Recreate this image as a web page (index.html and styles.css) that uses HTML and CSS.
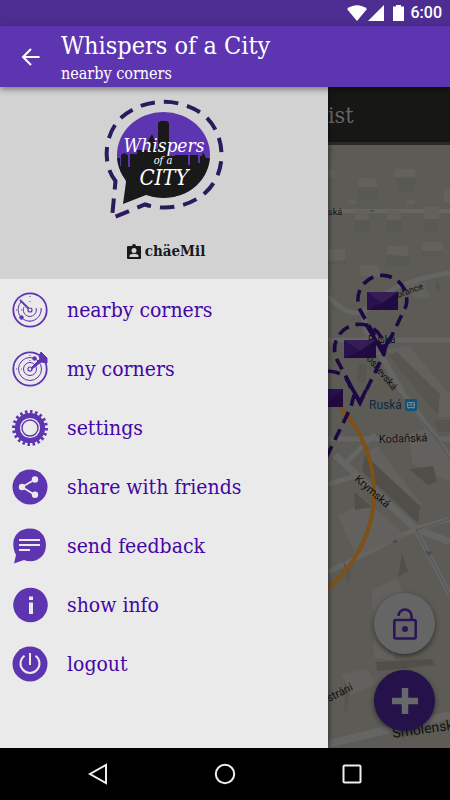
FILE: index.html
```html
<!DOCTYPE html>
<html lang="en">
<head>
<meta charset="utf-8">
<meta name="viewport" content="width=device-width, initial-scale=1">
<title>Whispers of a City</title>
<link rel="stylesheet" href="styles.css">
</head>
<body>
<div class="status">
  <svg width="20" height="17" viewBox="0 0 20 17"><path d="M0 4C6-1 14-1 20 4L10 16z" fill="#fff"/></svg>
  <svg width="16" height="17" viewBox="0 0 16 17"><path d="M16 0V16H0z" fill="#fff"/></svg>
  <svg class="battery" width="11" height="17" viewBox="0 0 11 17"><path d="M3 0h5v1.500h3V16H0V1.500h3z" fill="#fff"/></svg>
  <time>6:00</time>
</div>
<header class="appbar">
  <button class="back" aria-label="Back"><svg width="20" height="18" viewBox="0 0 20 18" fill="none" stroke="#fff" stroke-width="2"><path d="M18.500 9H2.500M10 1L2 9l8 8"/></svg></button>
  <div class="titles"><h1>Whispers of a City</h1><p>nearby corners</p></div>
</header>
<main class="stage">
  <aside class="drawer">
    <div class="profile">
      <svg class="logo" width="120" height="124" viewBox="104 98 120 124">
        <defs><clipPath id="bubble"><ellipse cx="163.500" cy="155" rx="46.500" ry="43"/></clipPath></defs>
        <path d="M115.500 181C101 163 105 132 122 117C145 97 182 97 205 116C227 136 227 174 205 193C189 207 165 211 145 204.500L112 218Z" fill="none" stroke="#2c1b5c" stroke-width="4" stroke-dasharray="14.500 9" stroke-dashoffset="2"/>
        <ellipse cx="163.500" cy="155" rx="46.500" ry="43" fill="#5e35b1"/>
        <path clip-path="url(#bubble)" fill="#191919" d="M115 158H120V166H121V155L124 153L128 155V167H130V154H137V150H148V141L152 134L155 141V149H158V123L160 121H167L169 123V156H175V155H188V165H190V155H198V163H200V156H202L203 152L206 158H212V200H115Z"/>
        <path d="M125 174l1 8-3 22 23-9z" fill="#191919"/>
        <g class="logo-text"><text x="164" y="152" font-size="19">Whispers</text><text x="163" y="164" font-size="11">of a</text><text x="164" y="185" font-size="22">CITY</text></g>
      </svg>
      <p class="user">
        <svg width="14" height="15" viewBox="0 0 14 15"><path fill="#191919" fill-rule="evenodd" d="M1 2h4a2 2 0 0 1 4 0h4a1 1 0 0 1 1 1v11a1 1 0 0 1-1 1H1a1 1 0 0 1-1-1V3a1 1 0 0 1 1-1zM7 4a2.500 2.500 0 1 0 0 5a2.500 2.500 0 1 0 0-5zM2.500 13h9v-1c0-3-9-3-9 0z"/></svg>
        <span>chäeMil</span>
      </p>
    </div>
    <nav>
      <a href="#"><svg viewBox="0 0 36 36" fill="none" stroke="#5e35b1"><circle cx="18" cy="18" r="16.700" stroke-width="1.800"/><circle cx="18" cy="18" r="2"  stroke-width="1.200"/><path d="M16.500 16.500L8 8" stroke-width="1.800"/><path d="M24 16a6.500 6.500 0 1 1-12-1" /><path d="M29 16a11.500 11.500 0 1 1-20-6"/><path d="M18 4v9M18 24v9M4 18h9M24 18h9" stroke-dasharray="1 4"/><circle cx="9.500" cy="25.500" r="1.800" fill="#5e35b1"/></svg><span>nearby corners</span></a>
      <a href="#"><svg viewBox="0 0 36 36" fill="none" stroke="#5e35b1"><circle cx="18" cy="18" r="16.700" stroke-width="1.800"/><circle cx="18" cy="18" r="2" stroke-width="1.200"/><circle cx="18" cy="18" r="6.500"/><circle cx="18" cy="18" r="11.500"/><path d="M18 4v9M18 24v9M4 18h9M24 18h9" stroke-dasharray="1 4"/><path d="M19 17l9-9-1-3 2-4 6 6v5l-6-1-9 7z" fill="#5e35b1"/><circle cx="22.500" cy="7.500" r="1.800" fill="#5e35b1"/></svg><span>my corners</span></a>
      <a href="#"><svg viewBox="0 0 36 36" fill="none" stroke="#5e35b1"><circle cx="18" cy="18" r="16.200" stroke-width="3.500" pathLength="40" stroke-dasharray="1 1"/><circle cx="18" cy="18" r="12.600" stroke-width="5"/><circle cx="18" cy="18" r="8" stroke-width="1.400"/></svg><span>settings</span></a>
      <a href="#"><svg viewBox="0 0 36 36"><circle cx="18" cy="18" r="17.500" fill="#5e35b1"/><path d="M23 10.500L10 18l13 8" fill="none" stroke="#eaeaea" stroke-width="1.800"/><g fill="#eaeaea"><circle cx="23" cy="10.500" r="3.200"/><circle cx="10" cy="18" r="3.200"/><circle cx="23" cy="25.700" r="3.200"/></g></svg><span>share with friends</span></a>
      <a href="#"><svg viewBox="0 0 36 36"><path fill="#5e35b1" d="M4 27C-3 13 4 .500 18 .500C28 .500 34 8 34 17C34 30 22 36 12 32L2 35.500z"/><path d="M7 12h21M7 17h21M7 22h11" stroke="#eaeaea" stroke-width="2"/></svg><span>send feedback</span></a>
      <a href="#"><svg viewBox="0 0 36 36"><circle cx="18.500" cy="18" r="17.300" fill="#5e35b1"/><path d="M17 9.500h4v3.500h-4zM17 15.500h4v11.500h-4z" fill="#eaeaea"/></svg><span>show info</span></a>
      <a href="#"><svg viewBox="0 0 36 36"><circle cx="18" cy="18" r="17.500" fill="#5e35b1"/><path d="M12.500 9.700a9.500 9.500 0 1 0 11 0M18 7v12" fill="none" stroke="#eaeaea" stroke-width="2"/></svg><span>logout</span></a>
    </nav>
  </aside>
  <section class="content">
    <div class="tab">ist</div>
    <div class="map">
      <svg class="tiles" viewBox="328 145 122 603" preserveAspectRatio="xMinYMin slice">
        <rect x="328" y="145" width="400" height="603" fill="#5d5b56"/>
        <path fill="#595953" d="M358 187h19v14h-20zM396 178h20l-4 14h-14zM355 220h14v12h-14zM387 220h14v12h-14zM424 218h15v14h-15zM387 255h22v11h-22zM421 250h22v6h-19zM328 249h18v15h-18zM334 148h-6v12z"/>
        <path fill="#62615d" d="M358 178h17l3 9h-20zM395 169h20l1 8h-21zM443 189h7v14l-6-1zM348 200h8v4h-8zM407 200h8v4h-8zM387 246h20l2 10-22-1zM422 242h20l2 9h-22zM328 249h17l1 11-18 2zM359 265h19l3 12-20-1zM328 170h6l1 9-7-1zM412 280l12 3 6 14-14 2-10-12z"/>
        <g fill="none" stroke="#656564">
          <path d="M328 211h122" stroke-width="4"/>
          <path d="M328 296q16 17 28 17c16 0 22-20 49-29q22-8 45-11" stroke-width="5"/>
          <path d="M328 340h122M328 439h122" stroke-width="5"/>
          <path d="M363 312l3 18 39 67 30 39 15 23" stroke-width="6"/>
          <path d="M335 455l80 73 35 14" stroke-width="7"/>
          <path d="M345 464l30-30M328 484l28-8M328 572l87-43 35-10M416 530l34 65" stroke-width="5"/>
          <path d="M328 744l122-29" stroke-width="8"/>
        </g>
        <path fill="#62615d" d="M355 210h14v10h-14zM387 210h14v10h-14zM424 207h15v12h-15zM386 350l22-5 42 50v22h-12zM365 454l12-8 44 58-3 4zM410 434l18-6 22 30v24l-38-18zM372 590l24-12 10 20-12 62-20-2zM341 674l26-5 9 15-26 12zM366 500l40 36-50 20-18-40z"/>
        <path fill="#504f4a" d="M365 455l55 51-2 17-56-52zM354 492l18 15-17 3zM402 553l6 18-10 6zM409 469l24-3 4 16-9 3zM376 662l56-3 3 6-58 6z"/>
        <path fill="#565550" d="M388 355l9-3 43 42-2 22zM359 363l8 3-2 18-8-4zM436 278l5 10-5 3zM343 560l8 12-3 14zM344 680l6 12-5 24zM434 420h16v12h-12z"/>
        <path d="M416 530l34 65M416 530l34-11M433 433l17 26M398 392l42 52" fill="none" stroke="#54545c"/>
        <path d="M369 211l3-1 3 1-3 1zM425 551l4 6 3-5zM391 542l6-3v4z" fill="#4a4a5a"/>
        <circle cx="251" cy="492" r="123" fill="none" stroke="#7d5119" stroke-width="4"/>
        <g class="map-text">
          <text x="328" y="215" font-size="9">ská</text><text transform="translate(398 298) rotate(-20)" font-size="9">břance</text><text x="368" y="343" font-size="10">Ruská</text>
          <text transform="translate(366 359) rotate(50)" font-size="10">oskevská</text><text x="369" y="409" font-size="12" fill="#13283f">Ruská</text>
          <text transform="translate(379 443) rotate(-2)" font-size="11">Kodaňská</text><text transform="translate(354 480) rotate(41)" font-size="11">Krymská</text>
          <text transform="translate(329 702) rotate(-27)" font-size="11">stráni</text><text transform="translate(393 738) rotate(-8)" font-size="14">Smolensk</text>
        </g>
        <rect x="405" y="399" width="12" height="12" rx="1" fill="#0f5379"/><path d="M407.500 402.500h7v5h-7zM411 402v3M407.500 405h7M409 407v2M413 407v2" fill="none" stroke="#738995"/>
        <g fill="none" stroke="#1c0842" stroke-width="3.600" stroke-dasharray="12 7">
          <path d="M384 352l-24-42a24.500 24.500 0 1 1 46-4z"/><path d="M360 403l-24-45a25 25 0 1 1 48-4z"/><path d="M328 371q12 1 18 6l8 18-3 12-25 51"/>
        </g>
        <path d="M366 324l17 29 6-14M346 378l14 24 6-12" fill="none" stroke="#1c0842" stroke-width="3.600"/>
        <path fill="#291150" d="M367 292h31v18h-31zM344 340h32v18h-32zM328 389h15v18h-15z"/>
        <path fill="#351e53" d="M367 292h31l-16 11zM344 340h32l-16 11z"/>
        <path fill="#1e073b" opacity=".7" d="M398 292v18h-31l15-7zM376 340v18h-32l16-7zM343 389v18h-15l4-9z"/>
      </svg>
      <div class="fabs">
        <button class="fab lock" aria-label="Unlock"><svg width="24" height="32" viewBox="0 0 24 32" fill="none" stroke="#2c1458" stroke-width="2.600"><rect x="1.300" y="12" width="21.400" height="18.500" rx="1.500"/><path d="M5.500 8a6.500 6.500 0 0 1 13 0v4"/><circle cx="12" cy="21" r="3" fill="#2c1458" stroke="none"/></svg></button>
        <button class="fab add" aria-label="Add"><svg width="26" height="26" viewBox="0 0 26 26"><path d="M13 0v26M0 13h26" stroke="#68676a" stroke-width="6.500"/></svg></button>
      </div>
    </div>
  </section>
</main>
<footer class="sysnav">
  <button aria-label="Back"><svg width="22" height="22" viewBox="0 0 22 22"><path d="M19 2v18L3 11z"/></svg></button>
  <button aria-label="Home"><svg width="22" height="22" viewBox="0 0 22 22"><circle cx="11" cy="11" r="9.200"/></svg></button>
  <button aria-label="Recent apps"><svg width="22" height="22" viewBox="0 0 22 22"><rect x="2.500" y="2.500" width="17" height="17" rx="1"/></svg></button>
</footer>
</body>
</html>
```
FILE: styles.css
```css
* { box-sizing: border-box; margin: 0; padding: 0; }
body {
  min-height: 100vh;
  display: flex;
  flex-direction: column;
  background: #000;
  font-family: "DejaVu Serif Condensed", "DejaVu Serif", serif;
}
button { border: 0; background: none; font: inherit; display: grid; place-items: center; }
svg { display: block; flex: none; }

.status {
  height: 26px;
  padding: 0 8px;
  display: flex;
  align-items: center;
  justify-content: flex-end;
  gap: 1px;
  background: #4e2d92;
  color: #fff;
  font: 500 16px/26px Roboto, sans-serif;
}
.battery { margin: 0 6px 0 8px; }

.appbar {
  position: relative;
  z-index: 3;
  min-height: 61px;
  display: flex;
  align-items: center;
  background: #5e35b1;
  color: #fff;
  box-shadow: 0 2px 6px rgba(0, 0, 0, .45);
}
.back { width: 61px; height: 61px; }
.titles { display: flex; flex-direction: column; }
.titles h1 { font-size: 25px; line-height: 34px; font-weight: 400; }
.titles p { font-size: 16px; line-height: 22px; }

.stage { flex: 1; display: flex; }
.drawer {
  position: relative;
  z-index: 2;
  flex: 0 0 min(328px, 80%);
  background: #eaeaea;
  box-shadow: 0 0 6px rgba(0, 0, 0, .6);
}
.profile {
  height: 192px;
  padding: 11px 0 0;
  display: flex;
  flex-direction: column;
  align-items: center;
  gap: 17px;
  background: #d2d2d2;
}
.logo { overflow: visible; }
.logo-text {
  fill: #fff;
  font-style: italic;
  text-anchor: middle;
}
.user {
  padding-left: 4px;
  display: flex;
  align-items: center;
  gap: 4px;
  color: #191919;
  font-size: 15px;
  line-height: 24px;
  font-weight: 700;
}
nav { padding-top: 1px; }
nav a {
  height: 59px;
  padding-left: 12px;
  display: flex;
  align-items: center;
  gap: 19px;
  color: #4506a8;
  font-size: 21px;
  text-decoration: none;
}
nav svg { width: 36px; height: 36px; }

.content { flex: 1; min-width: 0; display: flex; flex-direction: column; }
.tab {
  height: 58px;
  background: #171715;
  border-bottom: 3px solid #2a2a28;
  color: #666664;
  font-size: 23px;
  line-height: 57px;
}
.map { position: relative; flex: 1; overflow: hidden; background: #5d5b56; }
.tiles { position: absolute; width: 100%; height: 100%; }
.map-text { font-family: Roboto, sans-serif; fill: #111; }
.fabs {
  position: absolute;
  right: 15px;
  bottom: 17px;
  display: flex;
  flex-direction: column;
  gap: 16px;
}
.fab {
  width: 61px;
  height: 61px;
  border-radius: 50%;
  box-shadow: 0 2px 5px rgba(0, 0, 0, .5);
}
.lock { background: #666565; }
.add { background: #26124a; }

.sysnav {
  height: 52px;
  padding: 0 35px;
  display: flex;
  align-items: center;
  justify-content: space-around;
}
.sysnav svg { fill: none; stroke: #eee; stroke-width: 2; }
```
